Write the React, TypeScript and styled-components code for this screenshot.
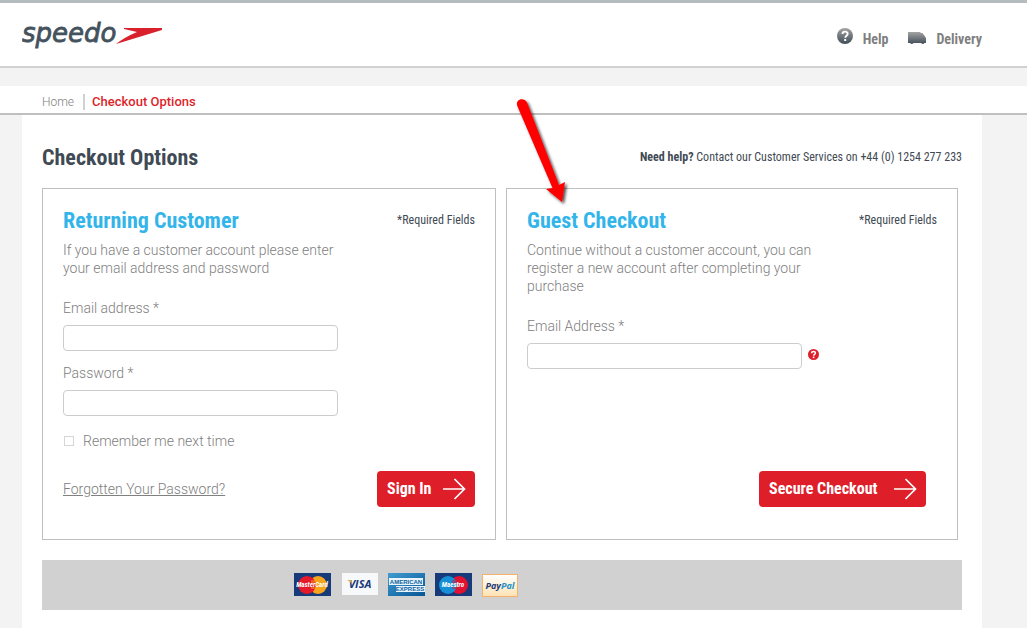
import React from "react";
import styled, { createGlobalStyle } from "styled-components";

const condensed = `"Liberation Sans Narrow", "Roboto Condensed", "Open Sans Condensed", "Liberation Sans", sans-serif`;

const GlobalStyle = createGlobalStyle`
  * { box-sizing: border-box; }
  body {
    margin: 0;
    background: #f3f3f3;
    color: #808080;
    font: 300 14px/18px Roboto, "Liberation Sans", sans-serif;
  }
  h1, h2, p { margin: 0; }
`;

const Page = styled.div`
  display: flex;
  flex-direction: column;
  min-height: 100vh;
`;

const Header = styled.header`
  display: flex;
  justify-content: space-between;
  height: 68px;
  padding: 11px 45px 0 22px;
  background: #fff;
  border-top: 3px solid #b5bcbf;
  border-bottom: 2px solid #d1d1d1;
`;

const LogoLink = styled.a`
  display: block;
  height: 40px;
`;

const HeaderNav = styled.nav`
  display: flex;
  gap: 20px;
  padding-top: 12px;
`;

const HeaderLink = styled.a`
  display: flex;
  gap: 10px;
  height: 24px;
  color: #808080;
  font: bold 14px/26px ${condensed};
  text-decoration: none;
`;

const Breadcrumb = styled.nav`
  display: flex;
  align-items: center;
  gap: 7px;
  height: 29px;
  margin-top: 18px;
  padding: 4px 42px 0;
  background: #fff;
  border-bottom: 2px solid #bfbfbf;
  font-size: 12px;
`;

const Crumb = styled.a`
  padding-right: 9px;
  border-right: 2px solid #d1d1d1;
  color: #808080;
  line-height: 16px;
  text-decoration: none;
`;

const CurrentCrumb = styled.span`
  color: #de1f2a;
  font-size: 13px;
  font-weight: 500;
  line-height: 16px;
`;

const Content = styled.main`
  flex: 1;
  margin: 0 45px 0 22px;
  padding: 29px 20px 18px;
  background: #fff;
`;

const TitleRow = styled.div`
  display: flex;
  align-items: center;
  justify-content: space-between;
  height: 28px;
  margin-bottom: 16px;
  color: #3f4a54;
  font: 12px/16px ${condensed};
`;

const Title = styled.h1`
  font: bold 22px/28px ${condensed};
`;

const HelpLine = styled.p`
  padding-bottom: 2px;
`;

const Panels = styled.div`
  display: grid;
  grid-template-columns: 454fr 452fr;
  gap: 10px;
  padding-right: 4px;
`;

const Panel = styled.form`
  position: relative;
  display: flex;
  flex-direction: column;
  min-height: 352px;
  padding: 19px 20px 32px;
  border: 1px solid #bfbfbf;
`;

const PanelHead = styled.div`
  display: flex;
  align-items: center;
  justify-content: space-between;
  height: 26px;
  margin-bottom: 7px;
`;

const PanelTitle = styled.h2`
  color: #33b5ea;
  font: bold 22px/26px ${condensed};
`;

const Required = styled.span`
  padding-bottom: 2px;
  color: #3f4a54;
  font: 12px/16px ${condensed};
`;

const Intro = styled.p`
  max-width: 300px;
  margin-bottom: 22px;
`;

const Field = styled.div`
  margin-bottom: 13px;
`;

const Label = styled.label`
  display: block;
  margin-bottom: 8px;
`;

const InputRow = styled.div`
  display: flex;
  gap: 6px;
`;

const Input = styled.input`
  display: block;
  width: 275px;
  height: 26px;
  padding: 0 8px;
  border: 1px solid #ccc;
  border-radius: 4px;
  background: #fff;
  font: inherit;
`;

const HelpButton = styled.button`
  width: 11px;
  height: 11px;
  margin-top: 6px;
  padding: 0;
  border: 0;
  background: none;
  line-height: 0;
`;

const Remember = styled.label`
  display: flex;
  align-items: center;
  gap: 9px;
  padding: 3px 0 0 1px;
`;

const Checkbox = styled.input`
  appearance: none;
  width: 10px;
  height: 10px;
  margin: 0;
  border: 1px solid #d6d6d6;
  background: #fff;
`;

const Actions = styled.div<{ $inset?: boolean }>`
  display: flex;
  align-items: center;
  justify-content: space-between;
  margin-top: auto;
  padding-right: ${(p) => (p.$inset ? "11px" : "0")};
`;

const ForgotLink = styled.a`
  color: #808080;
`;

const Button = styled.button<{ $wide?: boolean }>`
  display: flex;
  align-items: center;
  justify-content: space-between;
  width: ${(p) => (p.$wide ? "167px" : "98px")};
  height: 36px;
  margin-left: auto;
  padding: 0 9px 0 10px;
  border: 0;
  border-radius: 4px;
  background: #de1f2a;
  color: #fff;
  font: bold 16px/20px ${condensed};
`;

const Payments = styled.footer`
  display: flex;
  align-items: center;
  gap: 10px;
  height: 50px;
  margin-top: 20px;
  padding: 0 0 2px 252px;
  background: #d1d1d1;
`;

const PointerArrow = styled.svg`
  position: absolute;
  top: -96px;
  left: 4px;
  pointer-events: none;
`;

const Logo = () => (
  <svg width="144" height="40" viewBox="0 -6 144 40" role="img" aria-label="speedo">
    <text x="0" y="22" fontFamily="DejaVu Sans, sans-serif" fontStyle="oblique" fontSize="26" fill="#44525d" stroke="#44525d" strokeWidth="0.8">speedo</text>
    <path d="M102 8H140V10L94 24Q103 17 115 12L102 9Z" fill="#d8212c" />
  </svg>
);

const HelpIcon = () => (
  <svg width="16" height="18" viewBox="0 0 16 18" aria-hidden="true">
    <defs>
      <linearGradient id="steel" x1="0" y1="0" x2="0" y2="1">
        <stop offset="0" stopColor="#a3a3a3" />
        <stop offset="1" stopColor="#404d58" />
      </linearGradient>
    </defs>
    <circle cx="8" cy="10" r="8" fill="url(#steel)" />
    <path d="M5.500 8C5.500 4.800 10.700 4.900 10.700 7.800C10.700 9.700 8.200 9.600 8.200 11.800" fill="none" stroke="#fff" strokeWidth="1.900" />
    <rect x="7.200" y="13" width="2" height="2" fill="#fff" />
  </svg>
);

const VanIcon = () => (
  <svg width="18" height="26" viewBox="0 0 18 26" aria-hidden="true">
    <path d="M0 6H12.500V7H14.500L18 12V17H16.500Q15 19 13 17H5.500Q4 19 2 17H0Z" fill="url(#steel)" />
  </svg>
);

const ButtonArrow = () => (
  <svg width="24" height="22" viewBox="0 0 24 22" aria-hidden="true" fill="none" stroke="#fff" strokeWidth="1.700">
    <path d="M1 11H22M12.500 1L22.500 11L12.500 21" />
  </svg>
);

const HintIcon = () => (
  <svg width="11" height="11" viewBox="0 0 11 11" aria-hidden="true">
    <circle cx="5.500" cy="5.500" r="5.500" fill="#de1f2a" />
    <path d="M3.600 4.300C3.700 1.900 7.500 2 7.400 4.200C7.300 5.400 5.600 5.300 5.600 6.800" fill="none" stroke="#fff" strokeWidth="1.500" />
    <rect x="4.800" y="7.600" width="1.600" height="1.500" fill="#fff" />
  </svg>
);

const cardFont = { fontFamily: "Open Sans", fontStyle: "italic", fontWeight: 700 } as const;

const CirclesCard = ({ name, left, right, ground }: { name: string; left: string; right: string; ground: string }) => (
  <svg width="37" height="23" viewBox="0 0 37 23" role="img" aria-label={name}>
    <rect width="37" height="23" fill={ground} />
    <circle cx="24" cy="12" r="9" fill={right} />
    <circle cx="13" cy="12" r="9" fill={left} />
    <path d="M17 8H22M17 10H22M17 15H22" stroke={right} strokeWidth="1" fill="none" />
    <text x="18" y="14" textAnchor="middle" fontSize="7" fill="#fff" fontFamily="Roboto Condensed, Roboto" fontStyle="italic" fontWeight="700">{name}</text>
  </svg>
);

const VisaCard = () => (
  <svg width="37" height="23" viewBox="-1 0 37 23" role="img" aria-label="VISA">
    <rect width="36" height="22" fill="#f7f8fa" />
    <text x="18" y="15" textAnchor="middle" fontSize="11" fill="#173a7a" {...cardFont}>VISA</text>
    <path d="M5 7H9L10 11Q8 8 5 7Z" fill="#e9a72b" />
  </svg>
);

const AmexCard = () => (
  <svg width="37" height="23" viewBox="0 0 37 23" role="img" aria-label="American Express">
    <defs>
      <linearGradient id="amex" x1="0" y1="0" x2="1" y2="1">
        <stop offset="0" stopColor="#3f9bcf" />
        <stop offset="1" stopColor="#075796" />
      </linearGradient>
    </defs>
    <rect width="37" height="23" fill="url(#amex)" />
    <path d="M1 5H35V12H1ZM8 13H37V19H8Z" fill="#e9f4fa" />
    <text x="18" y="11" textAnchor="middle" fontFamily="Liberation Sans" fontWeight="700" fontSize="6" fill="#0a62a2">AMERICAN</text>
    <text x="22" y="18" textAnchor="middle" fontFamily="Liberation Sans" fontWeight="700" fontSize="6" fill="#0a62a2">EXPRESS</text>
  </svg>
);

const PayPalCard = () => (
  <svg width="36" height="25" viewBox="0 0 36 25" role="img" aria-label="PayPal">
    <defs>
      <linearGradient id="cream" x1="0" y1="0" x2="0" y2="1">
        <stop offset="0" stopColor="#fff" />
        <stop offset="1" stopColor="#fce3b4" />
      </linearGradient>
    </defs>
    <rect x="0.500" y="2.500" width="35" height="22" fill="url(#cream)" stroke="#f6b26b" />
    <text x="18" y="17" textAnchor="middle" fontSize="9" fill="#1f3c76" {...cardFont}>Pay<tspan fill="#2790c8">Pal</tspan></text>
  </svg>
);

const Arrow = () => (
  <PointerArrow width="66" height="118" viewBox="0 0 66 118" aria-hidden="true">
    <defs>
      <filter id="drop" x="-30%" y="-30%" width="160%" height="160%">
        <feDropShadow dx="2" dy="2" stdDeviation="1.500" floodColor="#000" floodOpacity="0.700" />
      </filter>
    </defs>
    <path d="M6.300 13C4 6 13 4 16 9.500L48 92L54 89L51 109L35 96L41.500 95Z" fill="#fe0000" filter="url(#drop)" />
  </PointerArrow>
);

export default function App() {
  return (
    <Page>
      <GlobalStyle />
      <Header>
        <LogoLink href="#"><Logo /></LogoLink>
        <HeaderNav>
          <HeaderLink href="#"><HelpIcon />Help</HeaderLink>
          <HeaderLink href="#"><VanIcon />Delivery</HeaderLink>
        </HeaderNav>
      </Header>
      <Breadcrumb aria-label="Breadcrumb">
        <Crumb href="#">Home</Crumb>
        <CurrentCrumb>Checkout Options</CurrentCrumb>
      </Breadcrumb>
      <Content>
        <TitleRow>
          <Title>Checkout Options</Title>
          <HelpLine><b>Need help?</b> Contact our Customer Services on +44 (0) 1254 277 233</HelpLine>
        </TitleRow>
        <Panels>
          <Panel>
            <PanelHead>
              <PanelTitle>Returning Customer</PanelTitle>
              <Required>*Required Fields</Required>
            </PanelHead>
            <Intro>If you have a customer account please enter your email address and password</Intro>
            <Field>
              <Label htmlFor="email">Email address *</Label>
              <Input id="email" type="email" />
            </Field>
            <Field>
              <Label htmlFor="password">Password *</Label>
              <Input id="password" type="password" />
            </Field>
            <Remember><Checkbox type="checkbox" />Remember me next time</Remember>
            <Actions>
              <ForgotLink href="#">Forgotten Your Password?</ForgotLink>
              <Button type="button">Sign In<ButtonArrow /></Button>
            </Actions>
          </Panel>
          <Panel>
            <PanelHead>
              <PanelTitle>Guest Checkout</PanelTitle>
              <Required>*Required Fields</Required>
            </PanelHead>
            <Intro>Continue without a customer account, you can register a new account after completing your purchase</Intro>
            <Field>
              <Label htmlFor="guest-email">Email Address *</Label>
              <InputRow>
                <Input id="guest-email" type="email" />
                <HelpButton type="button" aria-label="Email help"><HintIcon /></HelpButton>
              </InputRow>
            </Field>
            <Actions $inset>
              <Button type="button" $wide>Secure Checkout<ButtonArrow /></Button>
            </Actions>
            <Arrow />
          </Panel>
        </Panels>
        <Payments>
          <CirclesCard name="MasterCard" left="#e5192b" right="#f7a51c" ground="#173a7a" />
          <VisaCard />
          <AmexCard />
          <CirclesCard name="Maestro" left="#1590d6" right="#e0122f" ground="#173a7a" />
          <PayPalCard />
        </Payments>
      </Content>
    </Page>
  );
}
